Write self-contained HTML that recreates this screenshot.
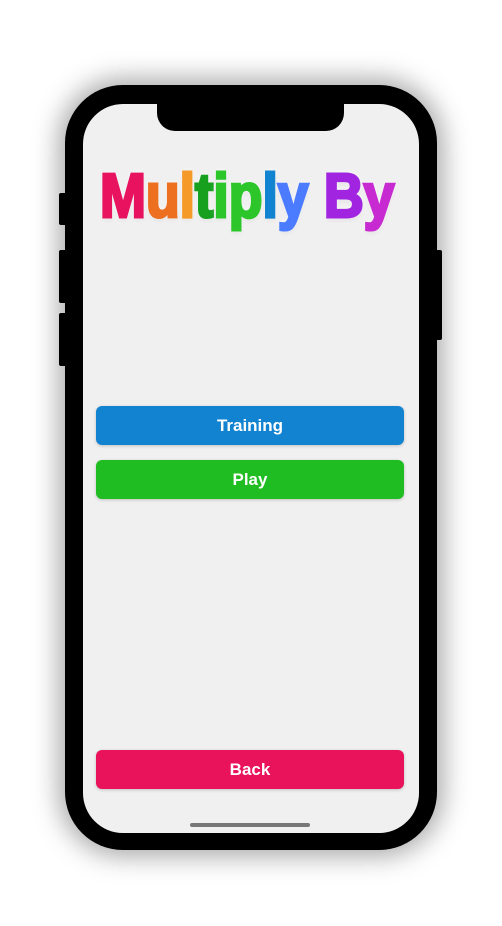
<html><head><style>
body{margin:0;width:502px;height:926px;background:#fff;position:relative;overflow:hidden;font-family:"Liberation Sans",sans-serif}
.phone{position:absolute;left:65px;top:85px;width:372px;height:765px;background:#000;border-radius:58px;box-shadow:0 0 26px 6px rgba(0,0,0,.35)}
.screen{position:absolute;left:83px;top:104px;width:336px;height:729px;background:#f0f0f0;border-radius:40px;overflow:hidden}
.notch{position:absolute;left:74px;top:-1px;width:187px;height:28px;background:#000;border-radius:0 0 18px 18px}
.btn{position:absolute;left:96px;width:308px;height:39px;border-radius:6px;color:#fff;font-weight:bold;font-size:17px;text-align:center;line-height:39px;box-shadow:0 1px 3px rgba(0,0,0,.2)}
.side{position:absolute;background:#000;border-radius:2px}
.logo{position:absolute;left:100px;top:161px;font-size:62px;font-weight:bold;white-space:nowrap;transform:scaleX(.89);transform-origin:left top;letter-spacing:0px;text-shadow:0 0 4px #fff,0 0 7px #fff,0 2px 6px rgba(0,0,0,.15)}
.logo span{-webkit-text-stroke:3px currentColor}
</style></head><body>
<div class="side" style="left:59px;top:193px;width:8px;height:32px"></div>
<div class="side" style="left:59px;top:250px;width:8px;height:53px"></div>
<div class="side" style="left:59px;top:313px;width:8px;height:53px"></div>
<div class="side" style="left:435px;top:250px;width:7px;height:90px"></div>
<div class="phone"></div>
<div class="screen"><div class="notch"></div>
<div style="position:absolute;left:107px;top:719px;width:120px;height:4px;background:#777;border-radius:2px"></div></div>
<div class="logo"><span style="color:#e8135f">M</span><span style="color:#ec7020">u</span><span style="color:#f59a28">l</span><span style="color:#16a01e">t</span><span style="color:#2cc62a">ip</span><span style="color:#1183d0">l</span><span style="color:#4b7bff">y</span> <span style="color:#a024e0">B</span><span style="color:#c72ad0">y</span></div>
<div class="btn" style="top:406px;background:#1283d1">Training</div>
<div class="btn" style="top:460px;background:#1fbd22">Play</div>
<div class="btn" style="top:750px;background:#e8135a">Back</div>
</body></html>
